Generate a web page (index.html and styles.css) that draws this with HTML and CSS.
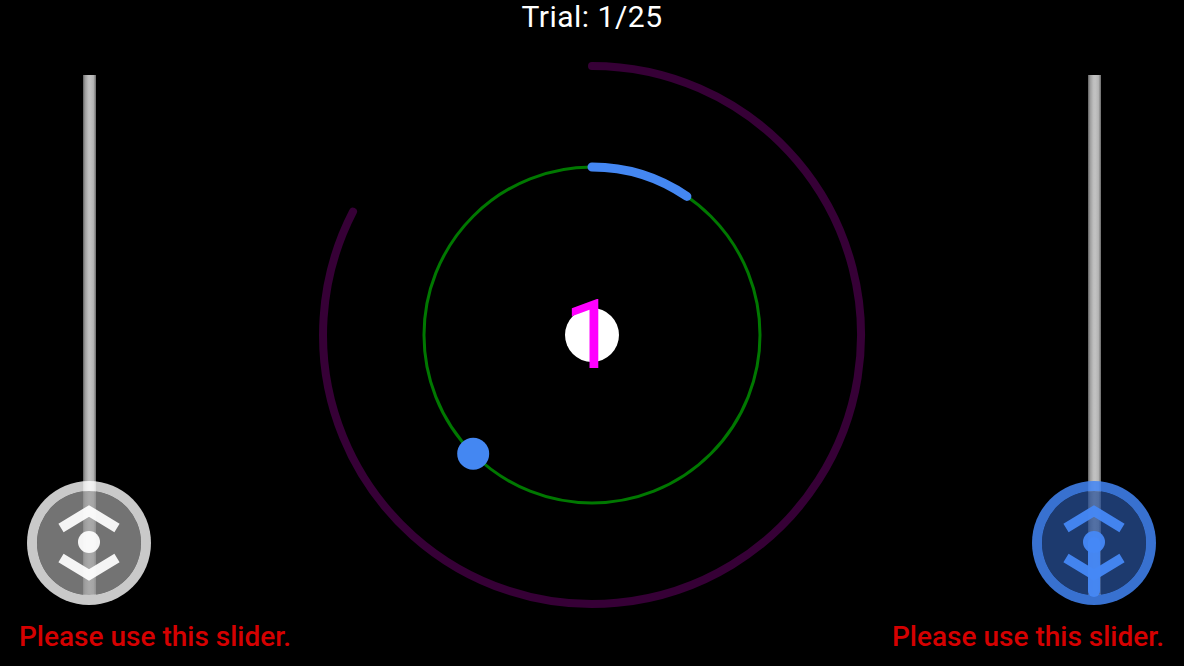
FILE: index.html
```html
<!DOCTYPE html>
<html>
<head>
<meta charset="utf-8">
<link rel="stylesheet" href="styles.css">
</head>
<body>
<div class="app">
  <div class="title">Trial: 1/25</div>
  <div class="main">
    <div class="side side-left">
      <div class="slider">
        <div class="track"></div>
        <div class="knob knob-grey">
          <svg class="knob-icon" viewBox="0 0 124 124" width="124" height="124">
            <path d="M34 47 L62 30 L90 47" class="chev"/>
            <path d="M34 77 L62 94 L90 77" class="chev"/>
            <circle cx="62" cy="61" r="11" class="dot"/>
          </svg>
        </div>
      </div>
      <div class="label">Please use this slider.</div>
    </div>
    <div class="stage">
      <svg class="field" viewBox="0 0 560 560" width="560" height="560">
        <path d="M280 11 A269 269 0 1 1 41 156.6" class="outer-arc"/>
        <circle cx="280" cy="280" r="168" class="orbit"/>
        <path d="M280 112 A168 168 0 0 1 374.9 141.4" class="progress"/>
        <circle cx="161.2" cy="398.8" r="16" class="ball"/>
        <circle cx="280" cy="280" r="27" class="center"/>
        <text x="279" y="313" class="count">1</text>
      </svg>
    </div>
    <div class="side side-right">
      <div class="slider">
        <div class="track"></div>
        <div class="knob knob-blue">
          <svg class="knob-icon" viewBox="0 0 124 124" width="124" height="124">
            <path d="M34 47 L62 30 L90 47" class="chev"/>
            <path d="M34 77 L62 94 L90 77" class="chev"/>
            <path d="M62 62 L62 110" class="stem"/>
            <circle cx="62" cy="61" r="11" class="dot"/>
          </svg>
        </div>
      </div>
      <div class="label">Please use this slider.</div>
    </div>
  </div>
</div>
</body>
</html>
```
FILE: styles.css
```css
html, body {
  margin: 0;
  padding: 0;
  background: #000;
}

.app {
  width: 1184px;
  height: 666px;
  display: flex;
  flex-direction: column;
  background: #000;
  font-family: Roboto, "Liberation Sans", sans-serif;
  overflow: hidden;
}

.title {
  height: 40px;
  font-size: 30px;
  line-height: 36px;
  letter-spacing: 0.5px;
  color: #fff;
  text-align: center;
  margin-top: -1px;
}

.main {
  flex: 1;
  display: grid;
  grid-template-columns: 300px 1fr 300px;
  align-items: start;
  margin-top: 1px;
}

.side {
  display: flex;
  flex-direction: column;
  padding-top: 35px;
}

.side-left {
  align-items: flex-start;
  padding-left: 19px;
}

.side-left .slider {
  margin-left: 8px;
}

.side-right {
  align-items: flex-end;
  padding-right: 20px;
}

.side-right .slider {
  margin-right: 8px;
}

.slider {
  position: relative;
  width: 124px;
  height: 530px;
}

.track {
  width: 13px;
  height: 520px;
  margin: 0 auto;
  background: linear-gradient(to right, #5e5e5e 0%, #9a9a9a 15%, #bdbdbd 40%, #c2c2c2 55%, #b5b5b5 80%, #6a6a6a 100%);
}

.knob {
  position: absolute;
  left: 0;
  bottom: 0;
  width: 104px;
  height: 104px;
  border-radius: 50%;
  border: 10px solid;
  background-clip: padding-box;
}

.knob-grey {
  background-color: rgba(160, 160, 160, 0.72);
  border-color: rgba(255, 255, 255, 0.79);
}

.knob-blue {
  background-color: rgba(40, 80, 152, 0.72);
  border-color: rgba(66, 133, 244, 0.85);
}

.knob-icon {
  display: block;
  margin: -10px;
}

.chev {
  fill: none;
  stroke-width: 10;
  stroke-linejoin: miter;
  stroke-linecap: butt;
}

.knob-grey .chev {
  stroke: rgba(255, 255, 255, 0.93);
}

.knob-grey .dot {
  fill: rgba(255, 255, 255, 0.93);
}

.knob-blue .chev {
  stroke: rgba(70, 136, 246, 0.95);
}

.knob-blue .dot {
  fill: rgba(70, 136, 246, 0.95);
}

.stem {
  fill: none;
  stroke: rgba(70, 136, 246, 0.95);
  stroke-width: 12;
  stroke-linecap: round;
}

.label {
  margin-top: 15px;
  font-size: 28px;
  font-weight: 500;
  color: #d50000;
  white-space: nowrap;
}

.stage {
  display: flex;
  justify-content: center;
  padding-top: 15px;
}

.field {
  display: block;
  overflow: visible;
}

.outer-arc {
  fill: none;
  stroke: #360036;
  stroke-width: 8;
  stroke-linecap: round;
}

.orbit {
  fill: none;
  stroke: #007800;
  stroke-width: 3;
}

.progress {
  fill: none;
  stroke: #4487f2;
  stroke-width: 9;
  stroke-linecap: round;
}

.ball {
  fill: #4487f2;
}

.center {
  fill: #fff;
}

.count {
  fill: #ff00ff;
  font-family: Roboto, "Liberation Sans", sans-serif;
  font-size: 97px;
  text-anchor: middle;
}
```
